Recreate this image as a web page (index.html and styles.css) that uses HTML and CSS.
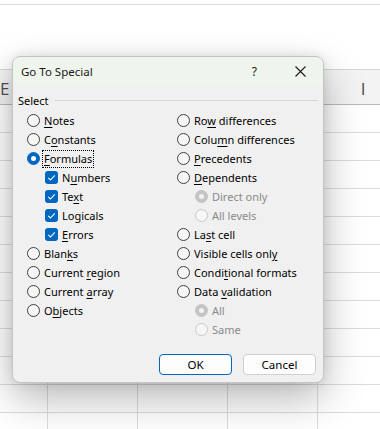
FILE: index.html
```html
<!DOCTYPE html>
<html>
<head>
<meta charset="utf-8">
<link rel="stylesheet" href="styles.css">
</head>
<body>
<div class="sheet">
  <div class="topbar"></div>
  <div class="blank"></div>
  <div class="colhead">
    <div class="col first">E</div>
    <div class="col">F</div>
    <div class="col">G</div>
    <div class="col">H</div>
    <div class="col">I</div>
  </div>
  <div class="grid"></div>
</div>

<div class="dialog">
  <div class="titlebar">
    <span class="title">Go To Special</span>
    <span class="help">?</span>
    <svg class="close" width="11" height="11" viewBox="0 0 11 11"><path d="M0.5 0.5 L10.5 10.5 M10.5 0.5 L0.5 10.5" stroke="#1b1b1b" stroke-width="1.1" fill="none"/></svg>
  </div>
  <div class="body">
    <div class="legend"><span>Select</span><span class="rule"></span></div>
    <div class="cols">
      <div class="column left">
        <div class="row"><span class="radio"></span><span class="label"><u>N</u>otes</span></div>
        <div class="row"><span class="radio"></span><span class="label">C<u>o</u>nstants</span></div>
        <div class="row"><span class="radio on"></span><span class="label focus"><u>F</u>ormulas</span></div>
        <div class="row sub"><span class="check"><svg width="13" height="13" viewBox="0 0 13 13"><path d="M3.3 6.8 L5.5 9 L9.8 4.3" stroke="#fff" stroke-width="1.1" fill="none"/></svg></span><span class="label">N<u>u</u>mbers</span></div>
        <div class="row sub"><span class="check"><svg width="13" height="13" viewBox="0 0 13 13"><path d="M3.3 6.8 L5.5 9 L9.8 4.3" stroke="#fff" stroke-width="1.1" fill="none"/></svg></span><span class="label">Te<u>x</u>t</span></div>
        <div class="row sub"><span class="check"><svg width="13" height="13" viewBox="0 0 13 13"><path d="M3.3 6.8 L5.5 9 L9.8 4.3" stroke="#fff" stroke-width="1.1" fill="none"/></svg></span><span class="label">Lo<u>g</u>icals</span></div>
        <div class="row sub"><span class="check"><svg width="13" height="13" viewBox="0 0 13 13"><path d="M3.3 6.8 L5.5 9 L9.8 4.3" stroke="#fff" stroke-width="1.1" fill="none"/></svg></span><span class="label"><u>E</u>rrors</span></div>
        <div class="row"><span class="radio"></span><span class="label">Blan<u>k</u>s</span></div>
        <div class="row"><span class="radio"></span><span class="label">Current <u>r</u>egion</span></div>
        <div class="row"><span class="radio"></span><span class="label">Current <u>a</u>rray</span></div>
        <div class="row"><span class="radio"></span><span class="label">O<u>b</u>jects</span></div>
      </div>
      <div class="column right">
        <div class="row"><span class="radio"></span><span class="label">Ro<u>w</u> differences</span></div>
        <div class="row"><span class="radio"></span><span class="label">Colu<u>m</u>n differences</span></div>
        <div class="row"><span class="radio"></span><span class="label"><u>P</u>recedents</span></div>
        <div class="row"><span class="radio"></span><span class="label"><u>D</u>ependents</span></div>
        <div class="row sub disabled"><span class="radio dis-on"></span><span class="label">Direct only</span></div>
        <div class="row sub disabled"><span class="radio dis"></span><span class="label">All levels</span></div>
        <div class="row"><span class="radio"></span><span class="label">La<u>s</u>t cell</span></div>
        <div class="row"><span class="radio"></span><span class="label">Visible cells onl<u>y</u></span></div>
        <div class="row"><span class="radio"></span><span class="label">Condi<u>t</u>ional formats</span></div>
        <div class="row"><span class="radio"></span><span class="label">Data <u>v</u>alidation</span></div>
        <div class="row sub disabled"><span class="radio dis-on"></span><span class="label">All</span></div>
        <div class="row sub disabled"><span class="radio dis"></span><span class="label">Same</span></div>
      </div>
    </div>
    <div class="buttons">
      <button class="btn default">OK</button>
      <button class="btn">Cancel</button>
    </div>
  </div>
</div>
</body>
</html>
```

FILE: styles.css
```css
* { box-sizing: border-box; }
html, body {
  margin: 0;
  padding: 0;
  width: 380px;
  height: 429px;
  overflow: hidden;
  background: #ffffff;
  font-family: "Noto Sans", "Open Sans", sans-serif;
}

.sheet {
  width: 380px;
  height: 429px;
  display: flex;
  flex-direction: column;
  overflow: hidden;
}
.topbar {
  height: 5px;
  flex: none;
  border-bottom: 1px solid #dcdcdc;
}
.blank {
  height: 64px;
  flex: none;
}
.colhead {
  height: 36px;
  flex: none;
  display: flex;
  background: #f3f3f3;
  border-top: 1px solid #d6d6d6;
  border-bottom: 1px solid #b9b9b9;
  overflow: hidden;
}
.col {
  width: 90px;
  flex: none;
  display: flex;
  align-items: center;
  justify-content: center;
  font-size: 17px;
  color: #505050;
  font-family: "Open Sans", "Liberation Sans", sans-serif;
  padding-top: 2px;
}
.col.first {
  width: 48px;
  justify-content: flex-start;
  padding-left: 0;
}
.grid {
  flex: 1;
  background-image:
    repeating-linear-gradient(to bottom, transparent 0, transparent 27px, #dcdcdc 27px, #dcdcdc 28px),
    repeating-linear-gradient(to right, transparent 0, transparent 89px, #dcdcdc 89px, #dcdcdc 90px);
  background-position: 0 0, -42px 0;
}

.dialog {
  position: absolute;
  left: 12px;
  top: 56px;
  width: 312px;
  height: 327px;
  border: 1px solid #c4c4c4;
  border-radius: 8px;
  background: #f0f0f0;
  box-shadow: 0 16px 40px rgba(0,0,0,0.28), 0 0 12px rgba(0,0,0,0.10);
  overflow: hidden;
  display: flex;
  flex-direction: column;
  font-size: 11px;
  color: #000;
}
.titlebar {
  height: 29px;
  flex: none;
  background: #eff4ec;
  display: flex;
  align-items: center;
  padding-left: 8px;
}
.title {
  flex: 1;
  font-size: 11.5px;
  color: #1a1a1a;
}
.help {
  font-size: 12px;
  color: #1a1a1a;
  margin-right: 38px;
}
.close {
  margin-right: 17px;
}

.body {
  flex: 1;
  display: flex;
  flex-direction: column;
  padding: 0 7px 7px 5px;
}
.legend {
  display: flex;
  align-items: center;
  height: 16px;
  margin-top: 6px;
}
.rule {
  flex: 1;
  height: 0;
  border-top: 1px solid #d6d6d6;
  margin-left: 6px;
  margin-right: -2px;
}
.cols {
  display: flex;
  margin-top: 3px;
  margin-left: 9px;
}
.column {
  display: flex;
  flex-direction: column;
}
.left { width: 150px; }
.row {
  height: 19px;
  display: flex;
  align-items: center;
  gap: 3px;
}
.row.sub { padding-left: 18px; }
.label {
  white-space: nowrap;
  line-height: 16px;
  padding: 0 1px;
}
.label u {
  text-underline-offset: 2px;
  text-decoration-thickness: 1px;
}
.focus {
  outline: 1px dotted #000;
  outline-offset: 0;
}
.radio {
  width: 13px;
  height: 13px;
  flex: none;
  border-radius: 50%;
  border: 1px solid #404040;
  background: #f6f6f6;
  position: relative;
}
.radio.on {
  background: #0067c0;
  border-color: #0067c0;
}
.radio.on::after, .radio.dis-on::after {
  content: "";
  position: absolute;
  left: 3px;
  top: 3px;
  width: 5px;
  height: 5px;
  border-radius: 50%;
  background: #fff;
}
.radio.dis {
  border-color: #c8c8c8;
  background: #f6f6f6;
}
.radio.dis-on {
  border-color: #c4c4c4;
  background: #c4c4c4;
}
.radio.dis-on::after { background: #f2f2f2; }
.disabled .label { color: #8a8a8a; }
.check {
  width: 13px;
  height: 13px;
  flex: none;
  border-radius: 3px;
  background: #0067c0;
  display: flex;
}
.buttons {
  margin-top: auto;
  display: flex;
  justify-content: flex-end;
  gap: 11px;
}
.btn {
  width: 73px;
  height: 21px;
  border: 1px solid #cfcfcf;
  border-radius: 4px;
  background: #fdfdfd;
  font-family: "Noto Sans", "Open Sans", sans-serif;
  font-size: 11.5px;
  color: #000;
  padding: 0;
  line-height: 19px;
}
.btn.default {
  border-color: #0067c0;
}
```
